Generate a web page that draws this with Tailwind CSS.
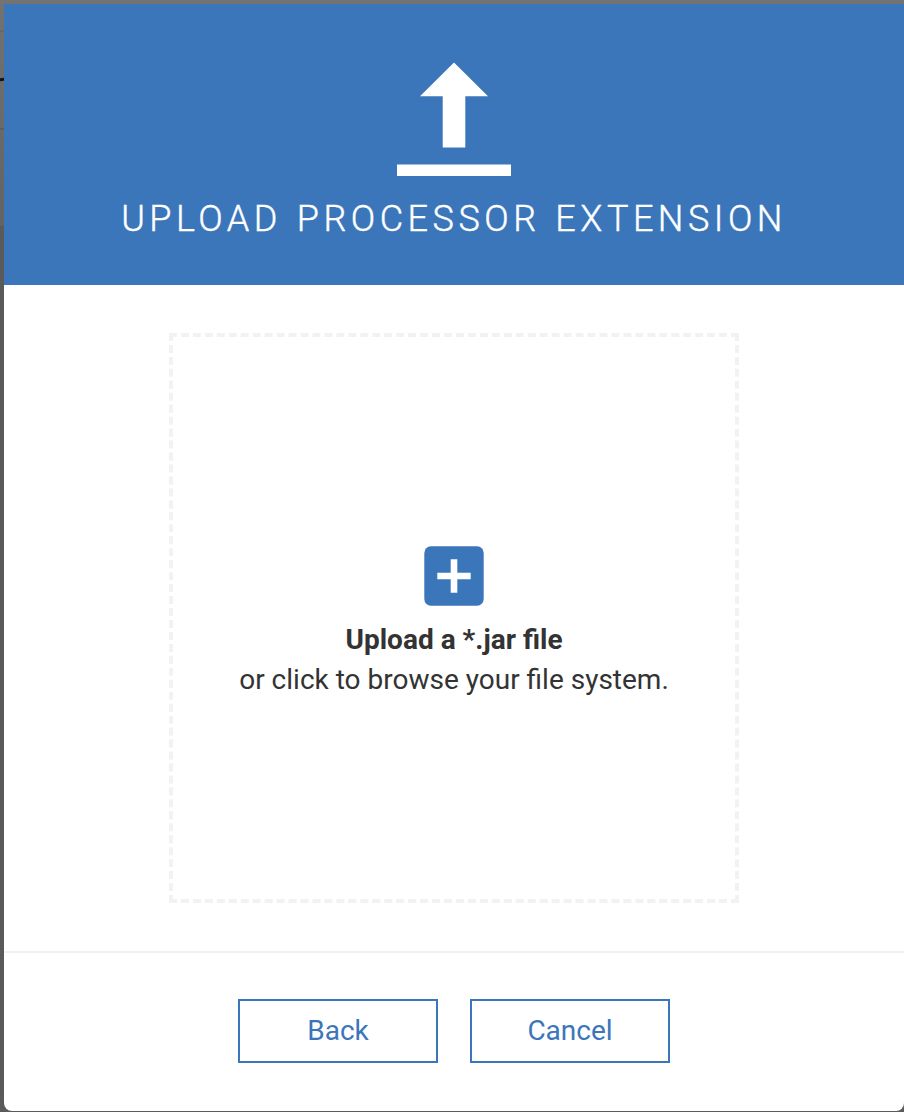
<!DOCTYPE html>
<html lang="en"><head><meta charset="utf-8"><title>Upload processor extension</title>
<script src="https://cdn.jsdelivr.net/npm/@tailwindcss/browser@4"></script></head>
<body class="w-[904px] h-[1112px] overflow-hidden bg-[#5b5b5b] font-['Roboto',sans-serif] text-[#333333] flex flex-col">
<div class="h-1 shrink-0 bg-[#737373]"></div>
<div class="flex h-[1108px]">
<div class="w-1 shrink-0 flex flex-col bg-[#5a5a5a]">
<div class="h-[222px] bg-linear-to-b from-[#727272] to-[#636363] flex flex-col">
<div class="mt-[26px] h-[2px] bg-[#676767]"></div>
<div class="mt-[46px] h-[3px] bg-[#0a1524] -skew-y-6"></div>
<div class="mt-[47px] h-[2px] bg-[#5f5f5f]"></div>
</div></div>
<main class="w-[900px] h-[1107px] shrink-0 bg-white rounded-b-lg overflow-hidden flex flex-col">
<header class="h-[281px] shrink-0 bg-[#3b76bb] text-white flex flex-col items-center">
<svg class="w-[114px] h-[114px] mt-[58px] shrink-0" viewBox="0 0 114 114" fill="currentColor"><path d="M57 .5 91 34.3H68.3V85.6H45.7V34.3H23ZM0 102.6H114V114H0Z"/></svg>
<h1 class="mt-[21px] text-[36px] leading-[44px] font-light tracking-[4.5px] [word-spacing:1.6px] [-webkit-text-stroke:0.4px_white] whitespace-nowrap">UPLOAD PROCESSOR EXTENSION</h1>
</header>
<section class="h-[666px] shrink-0 pt-12 flex justify-center">
<div class="w-[570px] h-[570px] border-4 border-dashed border-[#f2f2f2] flex flex-col items-center">
<svg class="w-[60px] h-[60px] mt-[209px] shrink-0" viewBox="0 0 60 60"><rect x=".3" y=".3" width="59.4" height="59.4" rx="6.6" fill="#3b76bb"/><path d="M26.7 13.3h6.6v13.4h13.4v6.6H33.3v13.4h-6.6V33.3H13.3v-6.6h13.4z" fill="white"/></svg>
<p class="mt-[14px] text-[28px] leading-10 font-bold">Upload a *.jar file</p>
<p class="text-[28px] leading-10">or click to browse your file system.</p>
</div></section>
<footer class="h-40 border-t-2 border-[#f2f2f2] flex justify-center gap-8 pt-[46px] text-[28px] text-[#3b76bb]">
<button class="w-[200px] h-16 border-2 border-[#3b76bb]">Back</button>
<button class="w-[200px] h-16 border-2 border-[#3b76bb]">Cancel</button>
</footer>
</main></div></body></html>
